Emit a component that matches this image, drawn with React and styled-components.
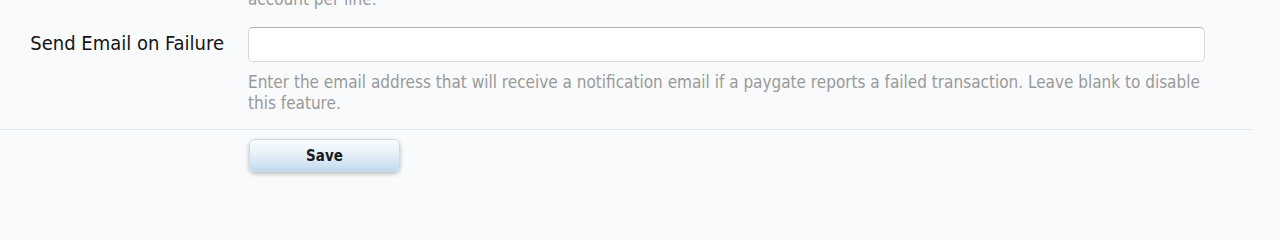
import React from 'react';
import styled, { createGlobalStyle } from 'styled-components';

const GlobalStyle = createGlobalStyle`
  body {
    margin: 0;
    background: #f9fafc;
    font-family: "DejaVu Sans Condensed", "DejaVu Sans", Tahoma, sans-serif;
  }
`;

const Page = styled.div`
  width: 1280px;
  height: 212px;
  overflow: hidden;
  box-sizing: border-box;
  padding-right: 28px;

  * {
    box-sizing: border-box;
  }
`;

const Row = styled.div`
  display: grid;
  grid-template-columns: 224px 1fr;
  column-gap: 24px;
  padding-right: 47px;
  margin-top: ${p => p.$offset || 0}px;
`;

const Label = styled.label`
  text-align: right;
  font-size: 20px;
  line-height: 33px;
  color: #141414;
`;

const Field = styled.div`
  display: flex;
  flex-direction: column;
`;

const TextInput = styled.input`
  height: 35px;
  width: 100%;
  border: 1px solid #d9d9d9;
  border-top-color: #b2b2b2;
  border-radius: 5px;
  background: #fff;
  font-size: 16px;
  padding: 0 8px;
  outline: 0;
`;

const Hint = styled.p`
  margin: ${p => (p.$flush ? 0 : 10)}px 0 0;
  font-size: 17px;
  line-height: 21px;
  color: #999;
`;

const Divider = styled.hr`
  border: 0;
  border-top: 1px solid #dbe8f4;
  margin: 15px 0 0;
`;

const Actions = styled.div`
  padding: 9px 0 0 249px;
`;

const SaveButton = styled.button`
  width: 151px;
  height: 33px;
  border: 1px solid #cddbe8;
  border-radius: 6px;
  background: linear-gradient(#fbfdff, #e4eef8 50%, #c2daee);
  box-shadow: 0 2px 4px rgba(0, 0, 0, 0.25);
  font-family: "DejaVu Sans Condensed", "DejaVu Sans", Tahoma, sans-serif;
  font-size: 15px;
  font-weight: 700;
  color: #1a1a1a;
  cursor: pointer;
`;

const App = () => (
  <Page>
    <GlobalStyle />
    <Row $offset={-11}>
      <div />
      <Hint $flush>account per line.</Hint>
    </Row>
    <Row $offset={17}>
      <Label htmlFor="failEmail">Send Email on Failure</Label>
      <Field>
        <TextInput id="failEmail" type="text" />
        <Hint>
          Enter the email address that will receive a notification email if a paygate reports a
          failed transaction. Leave blank to disable this feature.
        </Hint>
      </Field>
    </Row>
    <Divider />
    <Actions>
      <SaveButton>Save</SaveButton>
    </Actions>
  </Page>
);

export default App;
